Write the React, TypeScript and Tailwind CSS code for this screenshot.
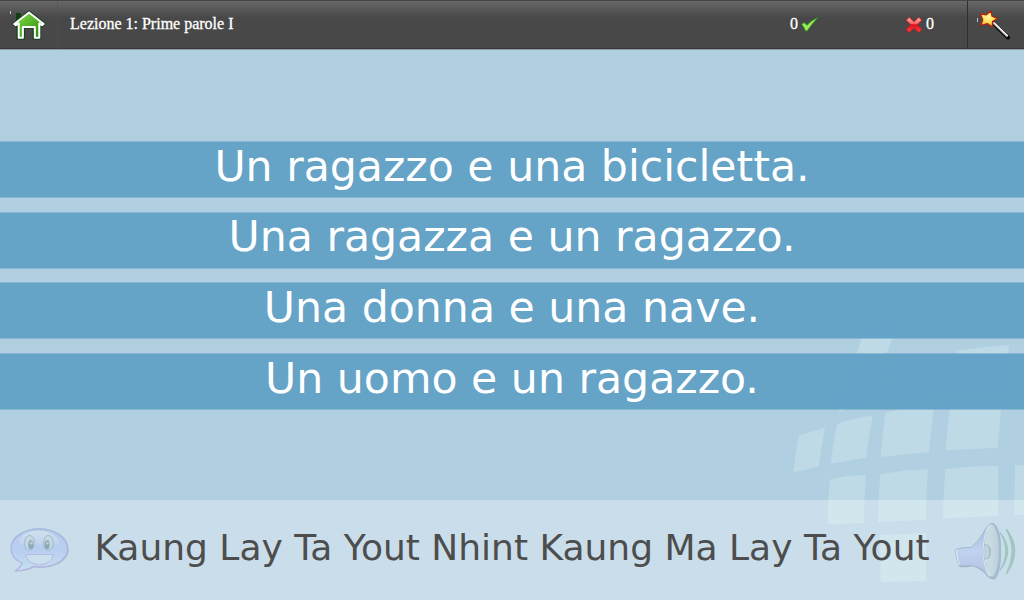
const answers: string[] = [
  'Un ragazzo e una bicicletta.',
  'Una ragazza e un ragazzo.',
  'Una donna e una nave.',
  'Un uomo e un ragazzo.',
];

function GlobeTiles() {
  return (
    <svg className="absolute right-0 bottom-0" width="250" height="280" viewBox="0 0 750 840" fill="#bddae6" aria-hidden="true">
      <path d="M270 38Q320 18 374 6L354 57L340 96L240 128L262 57Z" />
      <path d="M550 92Q625 80 705 75L690 198L530 208Z" />
      <path d="M225 160Q275 140 332 130L306 240L193 275Z" />
      <path d="M370 122Q430 108 498 104L482 218L344 236Z" />
      <path d="M74 348Q110 333 153 323Q142 385 134 440L59 457Q63 400 74 348Z" />
      <path d="M189 312Q240 293 296 287Q284 350 276 413L170 431Q177 370 189 312Z" />
      <path d="M335 277Q405 262 482 256Q470 330 465 396L320 411Q325 345 335 277Z" />
      <path d="M530 254L684 248Q675 320 672 383L515 391Q520 320 530 254Z" />
      <path d="M169 478Q215 466 276 464Q270 540 269 609L162 613Q160 535 169 478Z" />
      <path d="M319 462Q390 450 462 448Q455 530 456 599L312 606Q313 530 319 462Z" />
      <path d="M514 447Q590 438 673 437V588L507 595Q508 520 514 447Z" />
      <path d="M723 436L750 434V584L721 585Z" />
      <path d="M318 645L456 639L457 783L320 786Z" />
    </svg>
  );
}

function HomeIcon() {
  return (
    <svg width="36" height="32" viewBox="0 0 36 32" aria-hidden="true">
      <defs>
        <linearGradient id="roof" x1="0" y1="0" x2="1" y2="1">
          <stop offset="0" stopColor="#8bdc50" />
          <stop offset="0.5" stopColor="#53b427" />
          <stop offset="1" stopColor="#287d12" />
        </linearGradient>
      </defs>
      <path d="M5 5h5v8H5z" fill="#163e15" />
      <path d="M18 4.300L32.700 16L31 17.500L28.300 15.800V30H23.300V19H12.200V30H7.200V15.800L4.800 17.500L3.200 16Z" fill="#17471b" stroke="#17401b" strokeWidth="3.600" strokeLinejoin="round" />
      <path d="M18 4.500L32.700 16L31 17.200L28.300 15.300V29.800H23.800V19H11.900V29.800H7.700V15.300L4.800 17.200L3.200 16Z" fill="url(#roof)" stroke="#fff" strokeWidth="2" strokeLinejoin="round" />
    </svg>
  );
}

function WandIcon() {
  return (
    <svg width="34" height="34" viewBox="0 0 34 34" aria-hidden="true">
      <defs>
        <radialGradient id="star" cx="0.45" cy="0.35" r="0.65">
          <stop offset="0" stopColor="#fff8a0" />
          <stop offset="0.55" stopColor="#ffe052" />
          <stop offset="1" stopColor="#f79b20" />
        </radialGradient>
      </defs>
      <path d="M15 15L30 29.500" stroke="#080808" strokeWidth="4" strokeLinecap="round" />
      <path d="M15 14.500L29.500 28.500" stroke="#aaa" strokeWidth="2" />
      <path d="M16 14.500L29.800 28" stroke="#fff" strokeWidth="1.100" />
      <path d="M13 3L14 8.200L19.500 10.500L14.600 13.400L14.200 19L9.300 15.500L2.800 17.500L4.800 11.800L2.300 5.800L8.300 6.800Z" fill="url(#star)" stroke="#b61c12" strokeWidth="1.200" strokeLinejoin="round" />
    </svg>
  );
}

function CheckIcon() {
  return (
    <svg width="18" height="16" viewBox="0 0 18 16" aria-hidden="true">
      <path d="M0.800 8.500L3 6.500L6 9.300Q10.500 4 16.700 1.800Q11 8 6 15H4.500Q3.200 11.500 0.800 8.500Z" fill="#a0ea5c" stroke="#239620" strokeWidth="0.900" strokeLinejoin="round" />
    </svg>
  );
}

function CrossIcon() {
  return (
    <svg width="18" height="18" viewBox="0 0 18 18" aria-hidden="true">
      <defs>
        <linearGradient id="cross" x1="0" y1="0" x2="0" y2="1">
          <stop offset="0" stopColor="#ffb4ae" />
          <stop offset="0.42" stopColor="#f56562" />
          <stop offset="0.5" stopColor="#df1018" />
          <stop offset="1" stopColor="#fa4545" />
        </linearGradient>
      </defs>
      <path d="M4.200 1.200L9 5.700L13.800 1.200L16.800 4.200L12.200 8.700L16.800 13.400L13.800 16.400L9 11.900L4.200 16.400L1.200 13.400L5.800 8.700L1.200 4.200Z" fill="url(#cross)" stroke="#cf1b20" strokeWidth="0.900" strokeLinejoin="round" />
    </svg>
  );
}

function SmileyBubble() {
  return (
    <svg width="62" height="48" viewBox="0 0 186 144" aria-hidden="true">
      <defs>
        <linearGradient id="bubble" x1="0" y1="0" x2="0" y2="1">
          <stop offset="0" stopColor="#b8ccec" />
          <stop offset="0.5" stopColor="#b8cef0" />
          <stop offset="1" stopColor="#c5e0f1" />
        </linearGradient>
        <linearGradient id="shine" x1="0" y1="0" x2="0" y2="1">
          <stop offset="0" stopColor="#d0e1ed" />
          <stop offset="1" stopColor="#bfd2ee" />
        </linearGradient>
        <linearGradient id="bubble-edge" x1="0" y1="0" x2="0" y2="1">
          <stop offset="0" stopColor="#9fb8dc" />
          <stop offset="1" stopColor="#b8b0e4" />
        </linearGradient>
      </defs>
      <path d="M93 10C45 10 6 35 6 70C6 91 19 105 41 114C37 124 30 132 18 138C43 138 62 133 76 125C132 134 181 108 181 70C181 37 143 10 93 10Z" fill="#9db4c8" opacity=".65" />
      <path d="M90 7C43 7 3 32 3 68C3 89 16 103 38 112C34 122 27 130 15 136C40 136 59 130 73 122C128 130 177 105 177 68C177 34 138 7 90 7Z" fill="url(#bubble)" stroke="url(#bubble-edge)" strokeWidth="4" />
      <path d="M28 42C50 2 128 5 149 42Q152 55 143 55H37Q27 55 28 42Z" fill="url(#shine)" />
      <ellipse cx="60" cy="50" rx="15" ry="23" fill="#c5d9e4" stroke="#a1b7c7" strokeWidth="3" />
      <ellipse cx="118" cy="50" rx="15" ry="23" fill="#c5d9e4" stroke="#a1b7c7" strokeWidth="3" />
      <ellipse cx="64" cy="56" rx="8" ry="14" fill="#91a9b8" />
      <ellipse cx="114" cy="56" rx="8" ry="14" fill="#91a9b8" />
      <circle cx="65" cy="51" r="4" fill="#bfcdd7" />
      <circle cx="115" cy="51" r="4" fill="#bfcdd7" />
      <path d="M49 86H133C130 127 54 127 49 86Z" fill="#cae0ed" stroke="#b6b8e5" strokeWidth="3" />
    </svg>
  );
}

function SpeakerIcon() {
  return (
    <svg width="64" height="60" viewBox="0 0 192 180" aria-hidden="true">
      <defs>
        <linearGradient id="horn" x1="0" y1="0" x2="0" y2="1">
          <stop offset="0" stopColor="#a2b7dc" />
          <stop offset="0.5" stopColor="#bfd2ee" />
          <stop offset="1" stopColor="#b3bfe4" />
        </linearGradient>
        <linearGradient id="cone" x1="0" y1="0" x2="1" y2="0">
          <stop offset="0" stopColor="#d3e2e8" />
          <stop offset="1" stopColor="#bbd0db" />
        </linearGradient>
      </defs>
      <path d="M3 86Q22 79 50 80Q75 57 91 25Q101 8 117 8C147 18 144 158 119 172Q105 175 88 153Q72 138 52 133Q33 138 13 134Q3 112 3 86Z" fill="#91a8bb" opacity=".8" />
      <path d="M2 82Q20 76 49 76Q76 53 91 22Q99 5 113 5C144 5 144 168 114 168Q101 168 87 148Q72 133 49 130Q31 134 12 130Q1 108 2 82Z" fill="url(#horn)" stroke="#a6bcd2" strokeWidth="3" />
      <path d="M5 83Q5 108 14 128" stroke="#d7e5ef" strokeWidth="4" fill="none" />
      <ellipse cx="110" cy="86" rx="24" ry="80" fill="url(#cone)" stroke="#a6bbd4" strokeWidth="5" />
      <path d="M107 8C80 28 77 130 104 163" stroke="#d6e3ef" strokeWidth="4" fill="none" />
      <ellipse cx="104" cy="88" rx="14" ry="64" fill="#c6d9e1" opacity=".6" />
      <path d="M87 67C115 61 115 118 87 112Z" fill="#a6bdce" />
      <ellipse cx="93" cy="90" rx="10" ry="20" fill="#c0d2dc" />
      <path d="M135 31Q181 86 135 146Q170 86 135 31Z" fill="#9cc7b9" stroke="#a0c6be" strokeWidth="3" />
      <path d="M154 22Q203 86 154 155Q190 86 154 22Z" fill="#9cc7b9" stroke="#a0c6be" strokeWidth="5" />
    </svg>
  );
}

export default function App() {
  return (
    <main className="relative isolate flex h-[600px] w-[1024px] flex-col overflow-hidden bg-[#b0cfe1]">
      <div className="absolute inset-0 -z-10">
        <GlobeTiles />
      </div>
      <header className="flex h-[50px] shrink-0 border-t border-b border-t-[#444] border-b-[#8b9da8] bg-linear-to-b from-[#686868] to-[#484848] to-35% font-['Liberation_Serif',serif] text-[16px] leading-[46px] text-white shadow-[inset_0_-1px_0_#393939] [-webkit-text-stroke:0.3px_white]">
        <button className="relative flex w-[58px] shrink-0 items-start border-r border-[#505050]/50 pt-[7px] pl-[11px]" aria-label="Home">
          <span className="absolute top-[10px] left-[10px] h-[3px] w-px bg-[#bcd0d8]" />
          <HomeIcon />
        </button>
        <h1 className="w-[732px] pl-[12px]">Lezione 1: Prime parole I</h1>
        <div className="flex w-[115px] gap-[3px]">
          <span>0</span>
          <span className="pt-[15px]"><CheckIcon /></span>
        </div>
        <div className="flex w-[62px] gap-[3px]">
          <span className="pt-[15px]"><CrossIcon /></span>
          <span>0</span>
        </div>
        <button className="relative flex flex-1 items-start border-l border-[#303030] pt-[7px] pl-[10px]" aria-label="Strumenti">
          <span className="absolute top-[17px] left-[9px] h-[4px] w-px bg-[#b8c6cc]" />
          <WandIcon />
        </button>
      </header>
      <section className="flex h-[450px] shrink-0 flex-col gap-[13.600px] pt-[91px] font-['DejaVu_Sans',sans-serif] text-[42.640px] leading-[46px] text-white">
        {answers.map((answer) => (
          <button key={answer} className="block h-[57px] w-full shrink-0 border-y border-[#64a2c7]/55 bg-[#62a1c6]/97 bg-clip-padding pb-[7.400px] text-center whitespace-nowrap">
            {answer}
          </button>
        ))}
      </section>
      <footer className="flex h-[100px] shrink-0 bg-white/32 font-['DejaVu_Sans',sans-serif] text-[36px] leading-[96px] text-[#4d4d4d]">
        <button className="flex w-[70px] shrink-0 items-start pt-[26px] pl-[9.500px]" aria-label="Suggerimento"><SmileyBubble /></button>
        <p className="w-[884px] shrink-0 text-center whitespace-nowrap">Kaung Lay Ta Yout Nhint Kaung Ma Lay Ta Yout</p>
        <button className="flex w-[70px] shrink-0 items-start pt-[21.500px] pl-[0.500px]" aria-label="Ascolta"><SpeakerIcon /></button>
      </footer>
    </main>
  );
}
